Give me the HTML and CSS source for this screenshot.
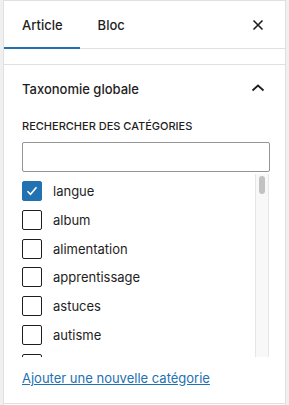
FILE: index.html
```html
<!DOCTYPE html>
<html lang="fr">
<head>
  <meta charset="UTF-8" />
  <meta name="viewport" content="width=device-width, initial-scale=1.0"/>
  <title>Réglages</title>
  <link rel="stylesheet" href="styles.css">
</head>
<body>
  <aside class="sidebar">
    <div class="sidebar-header">
      <div class="tabs">
        <button class="tab active">Article</button>
        <button class="tab">Bloc</button>
      </div>
      <button class="icon-btn" aria-label="Fermer">
        <svg width="24" height="24" viewBox="0 0 24 24"><path d="M7.5 7.5l9 9M16.5 7.5l-9 9" stroke="#1e1e1e" stroke-width="1.6" fill="none"/></svg>
      </button>
    </div>

    <div class="panel-spacer"></div>

    <section class="panel">
      <div class="panel-title">
        <span>Taxonomie globale</span>
        <svg width="24" height="24" viewBox="0 0 24 24"><path d="M6.5 14.5l5.5-5 5.5 5" stroke="#1e1e1e" stroke-width="1.8" fill="none"/></svg>
      </div>

      <div class="panel-body">
        <label class="search-label" for="cat-search">Rechercher des catégories</label>
        <input class="search-input" id="cat-search" type="text">

        <div class="term-list">
          <ul class="terms" id="terms"></ul>
          <div class="scroll-track"><div class="scroll-thumb"></div></div>
        </div>

        <a class="add-link" href="#">Ajouter une nouvelle catégorie</a>
      </div>
    </section>
  </aside>

  <script>
    // categories du panneau
    const terms = ["langue", "album", "alimentation", "apprentissage", "astuces", "autisme", "bébé"];
    const list = document.getElementById("terms");
    terms.forEach((t, i) => {
      const li = document.createElement("li");
      li.className = "term";
      li.innerHTML = `<span class="checkbox${i === 0 ? " checked" : ""}">` +
        (i === 0 ? '<svg width="20" height="20" viewBox="0 0 20 20"><path d="M5.5 10.3l3 3 6-7" stroke="#fff" stroke-width="1.6" fill="none"/></svg>' : '') +
        `</span><span>${t}</span>`;
      list.appendChild(li);
    });
  </script>
</body>
</html>
```

FILE: styles.css
```css
body {
  margin: 0;
  padding: 0;
  background: #f0f0f0;
  font-family: Inter, 'Liberation Sans', sans-serif;
  font-size: 13px;
  color: #1e1e1e;
}

.sidebar {
  margin: 0 3px 0 3px;
  height: 405px;
  background: white;
  border-left: 1px solid #e0e0e0;
  border-right: 1px solid #e0e0e0;
  border-top: 1px solid #e0e0e0;
  box-sizing: border-box;
  overflow: hidden;
}

.sidebar-header {
  display: flex;
  align-items: center;
  justify-content: space-between;
  height: 48px;
  box-shadow: inset 0 -1px 0 #e0e0e0;
  padding-right: 15px;
}

.tabs {
  display: flex;
  height: 100%;
}

.tab {
  background: none;
  border: none;
  font: inherit;
  font-weight: 500;
  color: #1e1e1e;
  padding: 0 17px 0 18px;
  height: 100%;
}

.tab.active {
  box-shadow: inset 0 -2px 0 #2271b1;
}

.icon-btn {
  background: none;
  border: none;
  padding: 0;
  width: 24px;
  height: 24px;
  margin-bottom: 1px;
}

.panel-spacer {
  height: 15px;
  border-bottom: 1px solid #e0e0e0;
}

.panel {
  border-bottom: 1px solid #e0e0e0;
}

.panel-title {
  display: flex;
  align-items: center;
  justify-content: space-between;
  height: 48px;
  padding: 0 15px 0 18px;
  font-weight: 500;
}

.panel-title svg {
  margin-top: -3px;
}

.panel-body {
  padding: 0 15px 16px 18px;
}

.search-label {
  display: block;
  font-size: 11px;
  font-weight: 500;
  text-transform: uppercase;
  line-height: 1.4;
  margin-top: 6px;
  margin-bottom: 8px;
}

.search-input {
  display: block;
  box-sizing: border-box;
  width: 248px;
  height: 30px;
  border: 1px solid #949494;
  border-radius: 2px;
  margin: 0;
}

.term-list {
  display: flex;
  height: 183px;
  margin-top: 2px;
  width: 247px;
  overflow: hidden;
}

.terms {
  flex: 1;
  list-style: none;
  margin: 0;
  padding: 7px 0 0 0;
}

.term {
  display: flex;
  align-items: center;
  height: 20px;
  margin-bottom: 8.7px;
}

.checkbox {
  box-sizing: border-box;
  width: 20px;
  height: 20px;
  border: 1px solid #1e1e1e;
  border-radius: 2px;
  margin-right: 11px;
  flex-shrink: 0;
  display: flex;
}

.checkbox.checked {
  background: #2271b1;
  border-color: #2271b1;
}

.checkbox.checked svg {
  margin: -1px;
}

.scroll-track {
  width: 14px;
  background: #f8f8f8;
  border-left: 1px solid #e6e6e6;
  border-right: 1px solid #e6e6e6;
  box-sizing: border-box;
  padding: 2px 3px;
}

.scroll-thumb {
  height: 18px;
  background: #c2c2c2;
  border-radius: 4px;
}

.add-link {
  display: inline-block;
  margin-top: 12px;
  color: #2271b1;
  line-height: 18px;
}
```
